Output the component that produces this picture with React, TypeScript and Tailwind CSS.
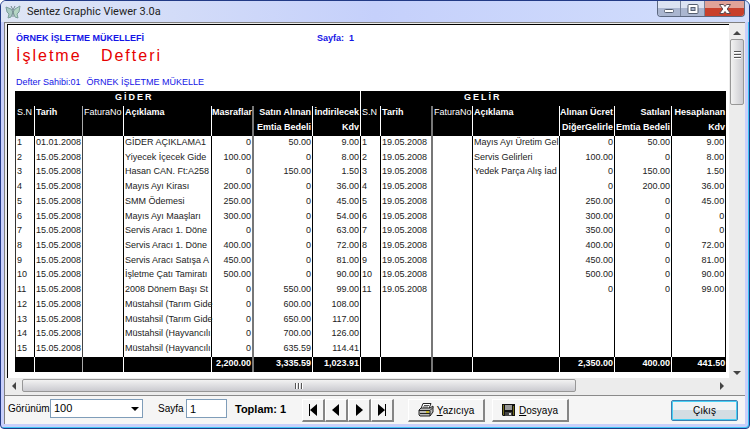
import type { ReactNode } from "react";

type Cell = string;

const columnWidths = [
  "w-[19px]", "w-[48px]", "w-[41px]", "w-[88px]", "w-[41px]", "w-[60px]", "w-[48px]",
  "w-[20px]", "w-[51px]", "w-[41px]", "w-[87px]", "w-[55px]", "w-[57px]", "w-[55px]",
];

const headings: Cell[] = [
  "S.N", "Tarih", "FaturaNo", "Açıklama", "Masraflar", "Satın Alınan", "İndirilecek",
  "S.N", "Tarih", "FaturaNo", "Açıklama", "Alınan Ücret", "Satılan", "Hesaplanan",
];

const subHeadings: Cell[] = [
  "", "", "", "", "", "Emtia Bedeli", "Kdv",
  "", "", "", "", "DiğerGelirle", "Emtia Bedeli", "Kdv",
];

// no, date, invoice, description, costs, purchased, vat
const expenses: Cell[][] = [
  ["1", "01.01.2008", "", "GİDER AÇIKLAMA1", "0", "50.00", "9.00"],
  ["2", "15.05.2008", "", "Yiyecek İçecek Gide", "100.00", "0", "8.00"],
  ["3", "15.05.2008", "", "Hasan CAN. Ft:A258", "0", "150.00", "1.50"],
  ["4", "15.05.2008", "", "Mayıs Ayı Kirası", "200.00", "0", "36.00"],
  ["5", "15.05.2008", "", "SMM Ödemesi", "250.00", "0", "45.00"],
  ["6", "15.05.2008", "", "Mayıs Ayı Maaşları", "300.00", "0", "54.00"],
  ["7", "15.05.2008", "", "Servis Aracı 1. Döne", "0", "0", "63.00"],
  ["8", "15.05.2008", "", "Servis Aracı 1. Döne", "400.00", "0", "72.00"],
  ["9", "15.05.2008", "", "Servis Aracı Satışa A", "450.00", "0", "81.00"],
  ["10", "15.05.2008", "", "İşletme Çatı Tamiratı", "500.00", "0", "90.00"],
  ["11", "15.05.2008", "", "2008 Dönem Başı St", "0", "550.00", "99.00"],
  ["12", "15.05.2008", "", "Müstahsil (Tarım Gide", "0", "600.00", "108.00"],
  ["13", "15.05.2008", "", "Müstahsil (Tarım Gide", "0", "650.00", "117.00"],
  ["14", "15.05.2008", "", "Müstahsil (Hayvancılı", "0", "700.00", "126.00"],
  ["15", "15.05.2008", "", "Müstahsil (Hayvancılı", "0", "635.59", "114.41"],
];

const incomes: Cell[][] = [
  ["1", "19.05.2008", "", "Mayıs Ayı Üretim Gel", "0", "50.00", "9.00"],
  ["2", "19.05.2008", "", "Servis Gelirleri", "100.00", "0", "8.00"],
  ["3", "19.05.2008", "", "Yedek Parça Alış İad", "0", "150.00", "1.50"],
  ["4", "19.05.2008", "", "", "0", "200.00", "36.00"],
  ["5", "19.05.2008", "", "", "250.00", "0", "45.00"],
  ["6", "19.05.2008", "", "", "300.00", "0", "0"],
  ["7", "19.05.2008", "", "", "350.00", "0", "0"],
  ["8", "19.05.2008", "", "", "400.00", "0", "72.00"],
  ["9", "19.05.2008", "", "", "450.00", "0", "81.00"],
  ["10", "19.05.2008", "", "", "500.00", "0", "90.00"],
  ["11", "19.05.2008", "", "", "0", "0", "99.00"],
];

const blank: Cell[] = ["", "", "", "", "", "", ""];

const totals: Cell[] = [
  "", "", "", "", "2,200.00", "3,335.59", "1,023.91",
  "", "", "", "", "2,350.00", "400.00", "441.50",
];

const isAmount = (i: number) => i % 7 > 3;

function rule(i: number, dark: boolean) {
  if (i === 0) return dark ? "border-l border-black" : "border-l border-[#333]";
  if (i === 5 || i === 9) return "border-l-2 border-[#777]";
  if (i === 2) return dark ? "border-l border-[#aaa]" : "border-l border-[#444]";
  return dark ? "border-l border-white" : "border-l border-black";
}

function cellClass(i: number, dark: boolean) {
  return `${rule(i, dark)} ${isAmount(i) ? "pr-px text-right" : "pl-px text-left"} whitespace-nowrap align-top`;
}

function Ledger() {
  return (
    <table className="h-[281px] w-full table-fixed border-separate border-spacing-0 text-[9px] leading-[12px] text-[#222]">
      <colgroup>
        {columnWidths.map((w, i) => (
          <col key={i} className={w} />
        ))}
      </colgroup>
      <thead className="bg-black text-white">
        <tr className="h-[15px]">
          <th colSpan={7} scope="colgroup" className="pl-[100px] text-left align-top font-bold tracking-[2px]">GİDER</th>
          <th colSpan={7} scope="colgroup" className="border-l border-white pl-[103px] text-left align-top font-bold tracking-[2px]">GELİR</th>
        </tr>
        <tr className="h-[15px]">
          {headings.map((h, i) => (
            <th key={i} scope="col" className={`${cellClass(i, true)} ${i % 7 === 0 || i % 7 === 2 ? "font-normal" : "font-bold"}`}>
              {h}
            </th>
          ))}
        </tr>
        <tr className="h-[15px]">
          {subHeadings.map((h, i) => (
            <td key={i} className={`${cellClass(i, true)} font-bold`}>{h}</td>
          ))}
        </tr>
      </thead>
      <tbody>
        {expenses.map((row, r) => (
          <tr key={r}>
            {[...row, ...(incomes[r] ?? blank)].map((value, i) => (
              <td key={i} className={`${cellClass(i, false)} last:border-r`}>{value}</td>
            ))}
          </tr>
        ))}
      </tbody>
      <tfoot className="bg-black font-bold text-white">
        <tr className="h-[15px]">
          {totals.map((value, i) => (
            <td key={i} className={cellClass(i, true)}>{value}</td>
          ))}
        </tr>
      </tfoot>
    </table>
  );
}

function Arrow({ d }: { d: string }) {
  return (
    <svg viewBox="0 0 8 8" className="h-2 w-2" fill="#444" aria-hidden="true">
      <path d={d} />
    </svg>
  );
}

function BevelButton({ label, className, children }: { label?: string; className: string; children: ReactNode }) {
  return (
    <button
      type="button"
      aria-label={label}
      className={`flex h-[23px] items-center justify-center border-t border-r-2 border-b-2 border-l border-t-white border-r-[#858585] border-b-[#858585] border-l-white bg-[#f5f5f5] ${className}`}
    >
      {children}
    </button>
  );
}

function NavIcon({ d }: { d: string }) {
  return (
    <svg viewBox="0 0 12 12" className="h-3 w-3" fill="#000" aria-hidden="true">
      <path d={d} />
    </svg>
  );
}

function TitleBar() {
  return (
    <header className="flex h-[21px] items-center bg-linear-to-r from-[#dfe6f5] via-[#c5d0fb] to-[#d2defc] pr-1 pl-1">
      <svg viewBox="0 0 16 14" className="h-[14px] w-4" aria-hidden="true">
        <path d="M1 2 6 4l2 3-2 5-3 1 1-4-2-2z" fill="#a9c9c2" stroke="#7b9c9a" />
        <path d="m15 1-5 3-2 3 2 5 3 1-1-4 2-2z" fill="#b5d5c4" stroke="#7b9c9a" />
        <path d="m6 1 2 4 2-4M8 5v7" fill="none" stroke="#71858a" />
      </svg>
      <h1 className="ml-[6px] flex-1 font-['Roboto',sans-serif] text-[11px] leading-4 text-[#222]">
        Sentez Graphic Viewer 3.0a
      </h1>
      <div className="flex h-4 self-start overflow-hidden rounded-b-[4px] border border-t-0 border-[#5c6880]">
        <button type="button" aria-label="Küçült" className="flex w-[23px] items-center justify-center border-r border-[#77839b] bg-linear-to-b from-[#dce3f2] from-50% to-[#aab6d0] to-50%">
          <svg viewBox="0 0 12 10" className="h-[10px] w-3" aria-hidden="true">
            <rect x="1.5" y="5.5" width="9" height="3" rx="1" fill="#fff" stroke="#555f70" />
          </svg>
        </button>
        <button type="button" aria-label="Ekranı kapla" className="flex w-6 items-center justify-center border-r border-[#77839b] bg-linear-to-b from-[#dce3f2] from-50% to-[#aab6d0] to-50%">
          <svg viewBox="0 0 12 10" className="h-[10px] w-3" aria-hidden="true">
            <rect x="1" y=".5" width="10" height="9" rx="1" fill="#fff" stroke="#555f70" />
            <rect x="4" y="3.5" width="4" height="3" fill="#aab6d0" stroke="#555f70" />
          </svg>
        </button>
        <button type="button" aria-label="Kapat" className="flex w-[39px] items-center justify-center bg-linear-to-b from-[#e0a298] from-50% to-[#c8402c] to-50%">
          <svg viewBox="0 0 12 10" className="h-[10px] w-3" aria-hidden="true">
            <path d="M.5.5h4L6 2.5 7.5.5h4L8.2 5l3.3 4.5h-4L6 7.5 4.5 9.5h-4L3.8 5z" fill="#fff" stroke="#5e4a50" />
          </svg>
        </button>
      </div>
    </header>
  );
}

function Toolbar() {
  return (
    <footer className="flex h-[29px] items-start border-t border-[#8a8a8a] bg-[#f5f5f5] pt-[3px] pr-[7px] pl-[3px] text-[10px] text-black">
      <label htmlFor="zoom" className="w-[42px] pt-[3px] leading-[14px]">Görünüm</label>
      <div className="grid w-[93px] items-center">
        <select id="zoom" defaultValue="100" className="col-start-1 row-start-1 h-[19px] appearance-none border border-[#7f9db9] bg-white pl-[3px] text-[11px]">
          <option>100</option>
        </select>
        <svg viewBox="0 0 8 4" className="pointer-events-none col-start-1 row-start-1 mr-1 h-1 w-2 justify-self-end" aria-hidden="true">
          <path d="M0 0h8L4 4z" />
        </svg>
      </div>
      <label htmlFor="page" className="ml-[15px] w-[28px] pt-[3px] leading-[14px]">Sayfa</label>
      <input id="page" defaultValue="1" className="h-[19px] w-[41px] border border-[#7f9db9] bg-white px-[3px] text-[11px]" />
      <p className="ml-2 w-[67px] pt-[3px] text-[11px] leading-[14px] font-bold whitespace-nowrap">Toplam: 1</p>
      <div className="flex">
        <BevelButton label="İlk sayfa" className="w-[23px]"><NavIcon d="M2 0h1v12H2zM10 0v12L3 6z" /></BevelButton>
        <BevelButton label="Önceki sayfa" className="w-[23px]"><NavIcon d="M9 0v12L2 6z" /></BevelButton>
        <BevelButton label="Sonraki sayfa" className="w-[23px]"><NavIcon d="M3 0v12l7-6z" /></BevelButton>
        <BevelButton label="Son sayfa" className="w-[23px]"><NavIcon d="M9 0h1v12H9zM2 0v12l7-6z" /></BevelButton>
      </div>
      <BevelButton className="ml-[14px] w-[77px] gap-[3px]">
        <svg viewBox="0 0 16 14" className="h-[14px] w-4" aria-hidden="true">
          <path d="M5 .5h8l-2 5H3z" fill="#fff" stroke="#222" />
          <path d="M6 2.5h5M5 4h5" stroke="#555" />
          <path d="m1 7 2-2h9l3-2v6l-3 4H2l-1-1z" fill="#bbb" stroke="#222" />
          <path d="M1 7.5h11l3-3M2 10.5h10M12 8v5" fill="none" stroke="#222" />
          <path d="M8 9h3" stroke="#c8b400" strokeWidth="1.5" />
        </svg>
        <span><u>Y</u>azıcıya</span>
      </BevelButton>
      <BevelButton className="ml-[7px] w-[77px] gap-1">
        <svg viewBox="0 0 13 12" className="h-3 w-[13px]" aria-hidden="true">
          <path d="M0 0h13v12H1l-1-1z" fill="#111" />
          <path d="M3 1h7v5H3z" fill="#999" />
          <path d="M1 1h1v10H1zM11 2h1v9h-1z" fill="#77701c" />
          <path d="M3 8h7v4H3z" fill="#444" />
          <path d="M7 9h2v2H7z" fill="#ddd" />
        </svg>
        <span><u>D</u>osyaya</span>
      </BevelButton>
      <button type="button" className="mt-px ml-auto h-[21px] w-[67px] rounded-[2px] border border-[#3c7fb1] bg-linear-to-b from-[#f0f3f5] from-50% to-[#d3dde3] to-50% text-[10px] ring-1 ring-[#48d0f5] ring-inset">
        Çıkış
      </button>
    </footer>
  );
}

export default function App() {
  return (
    <div className="flex min-h-screen flex-col overflow-hidden rounded-t-[6px] rounded-b-[4px] border border-[#223a86] bg-[#c9d0fb] font-['Liberation_Sans',Arial,sans-serif] shadow-[inset_-1px_-1px_0_#3cc4f5]">
      <TitleBar />
      <div className="mr-1 mb-1 ml-[3px] flex flex-1 flex-col border-t border-l border-[#808080] bg-[#ececec] pt-px">
        <div className="flex flex-1 pl-[2px]">
          <div className="flex min-w-0 flex-1 flex-col">
            <main className="flex-1 border-t border-l border-black bg-white pt-[7px] pr-[3px] pb-[6px] pl-[7px]">
              <div className="grid grid-cols-[301px_1fr] pl-px text-[9px] leading-[12px] font-bold text-[#1414e6]">
                <p>ÖRNEK İŞLETME MÜKELLEFİ</p>
                <p className="whitespace-pre">Sayfa:  1</p>
              </div>
              <h2 className="mt-[2px] pl-px text-[16px] leading-[20px] tracking-[2px] whitespace-pre text-[#e60000]">İşletme   Defteri</h2>
              <p className="mt-[10px] mb-[3px] flex gap-[6px] pl-px text-[9px] leading-[12px] text-[#1414e6]">
                <span>Defter Sahibi:01</span>
                <span>ÖRNEK İŞLETME MÜKELLE</span>
              </p>
              <Ledger />
            </main>
            <div className="flex h-[17px] items-center pb-[2px] pl-[3px]">
              <button type="button" aria-label="Sola kaydır" className="flex w-3 justify-start">
                <Arrow d="M6 0v8L2 4z" />
              </button>
              <div className="flex h-[13px] w-[77%] items-center justify-center gap-px rounded-[2px] border border-[#979797] bg-linear-to-b from-[#f2f2f2] to-[#cbcbd0]">
                <span className="h-[6px] w-[2px] border-l border-[#555] bg-white" />
                <span className="h-[6px] w-[2px] border-l border-[#555] bg-white" />
                <span className="h-[6px] w-[2px] border-l border-[#555] bg-white" />
              </div>
              <button type="button" aria-label="Sağa kaydır" className="mr-[3px] ml-auto">
                <Arrow d="M2 0v8l4-4z" />
              </button>
            </div>
          </div>
          <div className="flex w-4 flex-col items-center pt-[2px] pb-[18px]">
            <button type="button" aria-label="Yukarı kaydır" className="flex h-[13px] items-center">
              <Arrow d="M0 6h8L4 2z" />
            </button>
            <div className="flex h-[66px] w-[14px] flex-col items-center gap-px rounded-[2px] border border-[#979797] bg-linear-to-r from-[#f2f2f2] to-[#cbcbd0] pt-[11px]">
              <span className="h-[2px] w-[7px] border-t border-[#555] bg-white" />
              <span className="h-[2px] w-[7px] border-t border-[#555] bg-white" />
              <span className="h-[2px] w-[7px] border-t border-[#555] bg-white" />
            </div>
            <button type="button" aria-label="Aşağı kaydır" className="mt-auto">
              <Arrow d="M0 2h8L4 6z" />
            </button>
          </div>
        </div>
        <Toolbar />
      </div>
    </div>
  );
}
